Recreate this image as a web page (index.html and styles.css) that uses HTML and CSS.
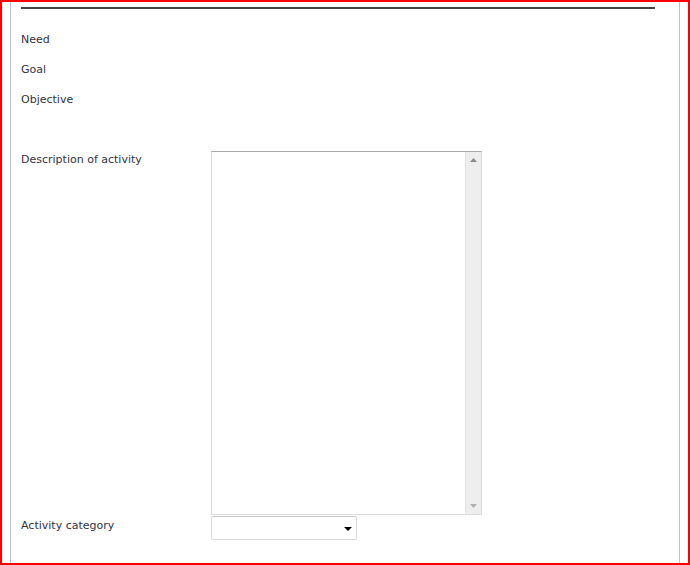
FILE: index.html
```html
<!DOCTYPE html>
<html>
<head>
<meta charset="utf-8">
<link rel="stylesheet" href="styles.css">
</head>
<body>
<div class="frame">
  <div class="panel">
    <div class="rule"></div>
    <div class="info">
      <div class="info-row">Need</div>
      <div class="info-row">Goal</div>
      <div class="info-row">Objective</div>
    </div>
    <div class="field field-desc">
      <label class="label">Description of activity</label>
      <div class="textbox">
        <textarea class="textarea"></textarea>
        <div class="scrollbar">
          <svg class="arrow" width="7" height="4" viewBox="0 0 7 4"><path d="M0 4 L3.5 0 L7 4 Z" fill="#8a8a8a"/></svg>
          <svg class="arrow" width="7" height="4" viewBox="0 0 7 4"><path d="M0 0 L3.5 4 L7 0 Z" fill="#b0b0b0"/></svg>
        </div>
      </div>
    </div>
    <div class="field field-cat">
      <label class="label">Activity category</label>
      <div class="select">
        <svg width="8" height="4" viewBox="0 0 8 4"><path d="M0 0 L8 0 L4 4 Z" fill="#000"/></svg>
      </div>
    </div>
  </div>
</div>
</body>
</html>
```
FILE: styles.css
```css
html, body {
  margin: 0;
  padding: 0;
  background: #fff;
}
body {
  font-family: "DejaVu Sans", Tahoma, sans-serif;
  font-size: 11px;
  color: #33333f;
}
.frame {
  box-sizing: border-box;
  width: 690px;
  height: 565px;
  border: 2px solid #ff0000;
  display: flex;
}
.panel {
  flex: 1;
  margin: 0 8px;
  border-left: 1px solid #b8c0e0;
  border-right: 1px solid #b8c0e0;
  padding: 5px 24px 0 10px;
}
.rule {
  height: 2px;
  background: #444;
}
.info {
  margin-top: 16px;
}
.info-row {
  height: 30px;
  line-height: 30px;
}
.field {
  display: flex;
  align-items: flex-start;
}
.field-desc {
  margin-top: 36px;
}
.field-desc .label {
  margin-top: 1px;
}
.field-cat {
  margin-top: 1px;
}
.label {
  width: 190px;
  flex: none;
  line-height: 16px;
}
.field-cat .label {
  margin-top: 2px;
}
.textbox {
  box-sizing: border-box;
  width: 271px;
  height: 364px;
  border: 1px solid #dcdcdc;
  border-top-color: #a9a9a9;
  display: flex;
}
.textarea {
  flex: 1;
  border: none;
  outline: none;
  resize: none;
  margin: 0;
  padding: 2px;
  font: inherit;
  background: #fff;
}
.scrollbar {
  width: 16px;
  flex: none;
  background: #eeeeee;
  border-left: 1px solid #e2e2e2;
  display: flex;
  flex-direction: column;
  justify-content: space-between;
  align-items: center;
  padding: 6px 0 6px;
  box-sizing: border-box;
}
.arrow {
  display: block;
}
.select {
  box-sizing: border-box;
  width: 146px;
  height: 24px;
  border: 1px solid #dcdcdc;
  border-top-color: #c8c8c8;
  border-radius: 2px;
  display: flex;
  justify-content: flex-end;
  align-items: center;
  padding-right: 4px;
}
.select svg {
  display: block;
  margin-top: 2px;
}
```
